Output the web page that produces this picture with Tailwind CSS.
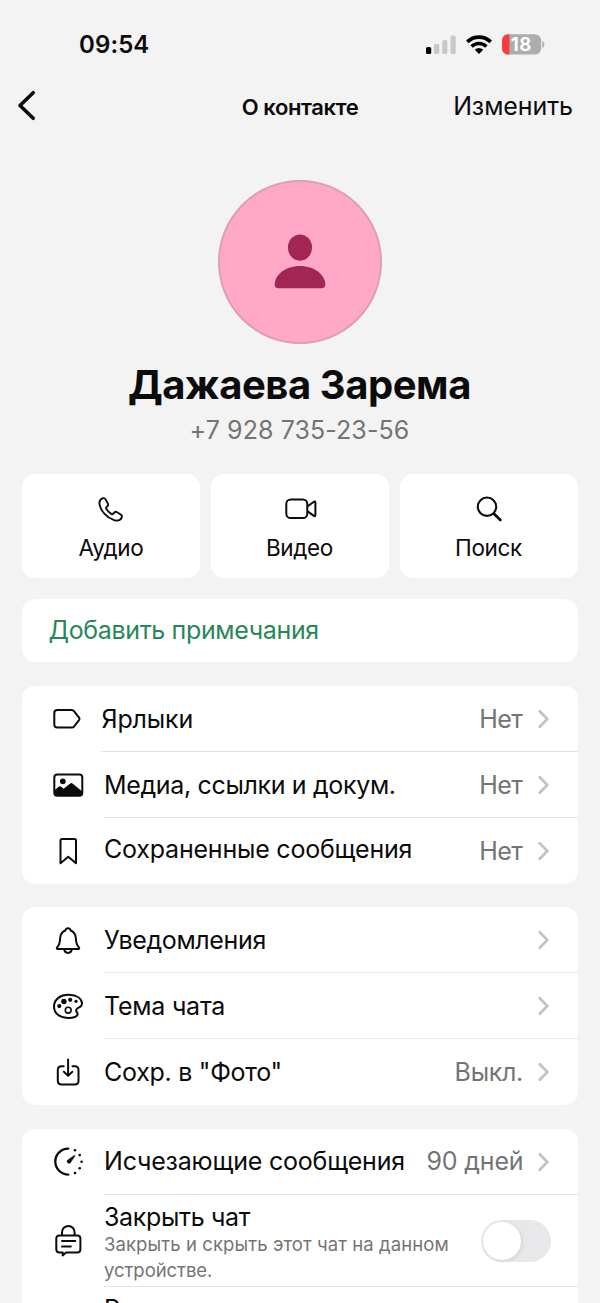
<!DOCTYPE html>
<html lang="ru">
<head>
<meta charset="utf-8">
<title>О контакте</title>
<script src="https://cdn.jsdelivr.net/npm/@tailwindcss/browser@4"></script>
</head>
<body class="bg-[#f3f3f3]">
<svg class="hidden">
  <symbol id="chev" viewBox="0 0 12 20"><path d="M1.700 2.200 9.300 10 1.700 17.800" fill="none" stroke="#c3c3c3" stroke-width="2.700" stroke-linecap="round" stroke-linejoin="round"/></symbol>
</svg>
<div class="flex h-[1303px] w-[600px] flex-col overflow-hidden font-[Inter,sans-serif] text-[25px] text-[#0b0b0b]">

  <!-- status bar -->
  <div class="flex h-[89px] shrink-0 items-center justify-between pl-[79px] pr-[55px]">
    <span class="pt-px text-[24px] font-semibold tracking-[0.1px]">09:54</span>
    <svg class="h-[24px] w-[120px]" viewBox="425 32.5 120 24">
      <rect x="426" y="46.5" width="5.2" height="7" rx="1.6" fill="#000"/>
      <rect x="434" y="43.5" width="5.2" height="10" rx="1.6" fill="#c9c9c9"/>
      <rect x="442.2" y="39.5" width="5.2" height="14" rx="1.6" fill="#c9c9c9"/>
      <rect x="450.5" y="35" width="5.2" height="18.5" rx="1.6" fill="#c9c9c9"/>
      <g fill="none" stroke="#000" stroke-width="3.6">
        <path d="M467.3 41.4a16.6 16.6 0 0 1 23.4 0"/>
        <path d="M471.6 46a10.6 10.6 0 0 1 14.8 0"/>
      </g>
      <path d="M474.8 49.2a6.2 6.2 0 0 1 8.4 0L479 53.4z" fill="#000"/>
      <clipPath id="bat"><rect x="502" y="33.7" width="39.2" height="20.4" rx="6.3"/></clipPath>
      <g clip-path="url(#bat)"><rect x="502" y="33" width="40" height="22" fill="#adadad"/><rect x="502" y="33" width="7.4" height="22" fill="#fb3a3d"/></g>
      <path d="M542.4 40.4c2.6.8 2.6 6.2 0 7z" fill="#adadad"/>
      <text x="510.800" y="50.6" font-family="Inter" font-weight="700" font-size="18.5" letter-spacing=".6" fill="#fff">18</text>
    </svg>
  </div>

  <!-- navigation -->
  <div class="grid h-[34px] shrink-0 grid-cols-3 items-center leading-[30px]">
    <svg class="ml-[16px] h-[34px] w-[22px]" viewBox="0 0.5 22 34"><path d="M17.200 4.200 4 17l13.200 12.800" fill="none" stroke="#0b0b0b" stroke-width="3.600" stroke-linecap="round" stroke-linejoin="round"/></svg>
    <span class="whitespace-nowrap pt-[2px] text-center text-[22px] font-semibold tracking-[-0.4px]">О контакте</span>
    <span class="whitespace-nowrap pr-[27px] text-right tracking-[-0.09px]">Изменить</span>
  </div>

  <!-- profile -->
  <div class="mt-[57px] flex shrink-0 flex-col items-center">
    <div class="flex size-[164px] items-center justify-center rounded-full border-2 border-[#df9cb5] bg-[#ffa9c6]">
      <svg class="h-[60px] w-[60px]" viewBox="270 232 60 60" fill="#a32553"><ellipse cx="300" cy="247.6" rx="12.1" ry="13.1"/><path d="M300 266c14.5 0 25.3 8.8 25.3 18.6 0 2.2-1.2 3.7-3.7 3.7h-43.2c-2.5 0-3.7-1.500-3.7-3.7 0-9.800 10.800-18.600 25.300-18.600z"/></svg>
    </div>
    <h1 class="mt-[16px] pr-px text-[40px] font-bold leading-[50px] tracking-[-0.44px]">Дажаева Зарема</h1>
    <p class="mt-[5px] pr-px leading-[30px] tracking-[0.09px] text-[#747474]">+7 928 735-23-56</p>
  </div>

  <!-- quick actions -->
  <div class="mx-[22px] mt-[29px] grid shrink-0 grid-cols-3 gap-[11px] text-[22.5px] leading-[28px] tracking-[-0.35px]">
    <div class="flex h-[104px] flex-col items-center rounded-[13px] bg-white pt-[20px]">
      <svg class="h-[30px] w-[36px]" viewBox="-0.6 -0.6 25.9 21.6" fill="none" stroke="#0b0b0b" stroke-width="1.35" stroke-linejoin="round"><path d="M6.1 2.6C4.6 3.3 3.7 4.700 4.100 6.900 5 11.700 9.300 16.500 14.600 18.200 17.300 19 19.300 18.300 20.100 16.300 20.400 15.500 20.200 14.900 19.600 14.400L16.700 12.500C16 12.100 15.300 12.200 14.800 12.700L13.900 13.600C13.500 14 13 14 12.500 13.700 11 12.700 9.900 11.600 9 10.200 8.700 9.700 8.800 9.200 9.200 8.800L9.900 8C10.400 7.500 10.400 6.900 10.100 6.300L8.400 3.200C7.900 2.400 7 2.200 6.100 2.600Z"/></svg>
      <span class="mt-[10px]">Аудио</span>
    </div>
    <div class="flex h-[104px] flex-col items-center rounded-[13px] bg-white pt-[20px]">
      <svg class="h-[30px] w-[36px]" viewBox="-0.7 0.5 36 30" fill="none" stroke="#0b0b0b" stroke-width="2" stroke-linejoin="round"><rect x="3.600" y="6" width="21" height="18.600" rx="4.400"/><path d="m25 12.700 6.200-4.500c.7-.5 1.500-.2 1.500.7v12.800c0 .9-.8 1.200-1.500.7L25 17.900"/></svg>
      <span class="mt-[10px] pr-px">Видео</span>
    </div>
    <div class="flex h-[104px] flex-col items-center rounded-[13px] bg-white pt-[20px]">
      <svg class="h-[30px] w-[36px]" viewBox="0 0 36 30" fill="none" stroke="#0b0b0b" stroke-linecap="round"><circle cx="16" cy="12.700" r="9.200" stroke-width="2.100"/><path d="m23.200 19.900 6.200 6" stroke-width="2.800"/></svg>
      <span class="mt-[10px] pr-px">Поиск</span>
    </div>
  </div>

  <div class="mx-[22px] mt-[21px] flex h-[63px] shrink-0 items-center rounded-[13px] bg-white pl-[26.500px] tracking-[-0.35px] text-[#278759]">Добавить примечания</div>

  <!-- media -->
  <div class="mx-[22px] mt-[24px] shrink-0 rounded-[13px] bg-white pl-[26px]">
    <div class="flex h-[66px]">
      <svg class="mt-[12px] size-[40px] shrink-0" viewBox="0 -0.5 40 40" fill="none" stroke="#0b0b0b" stroke-width="2" stroke-linejoin="round"><path d="M9.300 11.500h14.200c1.200 0 2 .4 2.700 1.300l5 6.500c.5.700.5 1.300 0 2l-5 6.500c-.7.900-1.500 1.300-2.700 1.300H9.300c-1.900 0-3-1.100-3-3V14.500c0-1.900 1.100-3 3-3z"/></svg>
      <div class="ml-[13px] flex grow items-center border-b border-[#e3e3e3] pr-[28px]">
        <span class="grow pl-[0.500px] pt-[2px] tracking-[-0.15px]">Ярлыки</span><span class="pt-[2px] tracking-[-0.5px] text-[#747474]">Нет</span><svg class="ml-[15.500px] h-[20px] w-[12px]"><use href="#chev"/></svg>
      </div>
    </div>
    <div class="flex h-[66px]">
      <svg class="mt-[12px] size-[40px] shrink-0" viewBox="0 0 40 40"><rect x="6.300" y="10.500" width="28" height="21.200" rx="3" fill="none" stroke="#0b0b0b" stroke-width="2"/><circle cx="14.800" cy="17.300" r="2.900" fill="#0b0b0b"/><path d="M6.300 26.500l4.300-3.700c1-.8 1.800-.8 2.700 0l2.300 2 6.300-5.100c1-.8 1.900-.8 2.900 0l9.500 7.800V29a2.500 2.500 0 0 1-2.500 2.500h-23A2.500 2.500 0 0 1 6.300 29z" fill="#0b0b0b"/></svg>
      <div class="ml-[16px] flex grow items-center border-b border-[#e3e3e3] pr-[28px]">
        <span class="grow pt-[2px] tracking-[-0.34px]">Медиа, ссылки и докум.</span><span class="pt-[2px] tracking-[-0.5px] text-[#747474]">Нет</span><svg class="ml-[15.500px] h-[20px] w-[12px]"><use href="#chev"/></svg>
      </div>
    </div>
    <div class="flex h-[66px]">
      <svg class="mt-[12px] size-[40px] shrink-0" viewBox="0 -0.5 40 40" fill="none" stroke="#0b0b0b" stroke-width="2" stroke-linejoin="round"><path d="M12.500 32.800V10.300c0-1 .7-1.700 1.700-1.700h12.100c1 0 1.700.7 1.700 1.700v22.500l-7.750-6.600z"/></svg>
      <div class="ml-[16px] flex grow items-center pr-[28px]">
        <span class="grow pb-[3px] tracking-[-0.21px]">Сохраненные сообщения</span><span class="pt-px tracking-[-0.5px] text-[#747474]">Нет</span><svg class="ml-[15.500px] h-[20px] w-[12px]"><use href="#chev"/></svg>
      </div>
    </div>
  </div>

  <!-- chat settings -->
  <div class="mx-[22px] mt-[23px] shrink-0 rounded-[13px] bg-white pl-[26px]">
    <div class="flex h-[66px]">
      <svg class="mt-[12px] size-[40px] shrink-0" viewBox="0 -0.6 40 40" fill="none" stroke="#0b0b0b" stroke-width="2" stroke-linejoin="round"><path d="M17.300 10.900C17.700 9.500 18.700 8.700 20 8.700s2.300.8 2.700 2.200c3.200 1.300 4.900 4 5.100 7.500.2 4.300.8 7 3 9.300.8.900.4 1.700-.7 1.700H9.900c-1.100 0-1.500-.8-.7-1.700 2.200-2.300 2.800-5 3-9.300.2-3.500 1.900-6.200 5.100-7.500z"/><path d="M16.200 29.600c.2 2.300 1.700 3.700 3.800 3.700s3.600-1.400 3.800-3.700"/></svg>
      <div class="ml-[16px] flex grow items-center border-b border-[#e8e8e8] pr-[28px]">
        <span class="grow pt-[2px] tracking-[-0.34px]">Уведомления</span><svg class="ml-[15px] h-[20px] w-[12px]"><use href="#chev"/></svg>
      </div>
    </div>
    <div class="flex h-[66px]">
      <svg class="mt-[12px] size-[40px] shrink-0" viewBox="0 -0.3 40 40" fill="none" stroke="#0b0b0b" stroke-width="2" stroke-linejoin="round"><path d="M21 9.500C12.600 9.100 6 14.200 6 21.200c0 7 5.800 11.200 13.700 11.500 5.600.2 10.200-1.500 9.900-4.300-.2-1.500-1.700-1.900-1.500-3.600.2-1.900 2.300-2.200 4-3.200 1.300-.8 2-2 1.900-3.600C33.600 13 28.600 9.800 21 9.500z"/><circle cx="20.200" cy="24.900" r="2.900" stroke-width="1.600"/><g fill="#0b0b0b" stroke="none"><circle cx="11.300" cy="20.800" r="2.100"/><circle cx="15.900" cy="16.200" r="2.700"/><circle cx="22.200" cy="14.500" r="2.100"/><circle cx="28" cy="16" r="1.600"/></g></svg>
      <div class="ml-[16px] flex grow items-center border-b border-[#e8e8e8] pr-[28px]">
        <span class="grow pt-[2px] tracking-[-0.24px]">Тема чата</span><svg class="ml-[15px] h-[20px] w-[12px]"><use href="#chev"/></svg>
      </div>
    </div>
    <div class="flex h-[66px]">
      <svg class="mt-[12px] size-[40px] shrink-0" viewBox="0 -0.5 40 40" fill="none" stroke="#0b0b0b" stroke-width="2" stroke-linecap="round" stroke-linejoin="round"><path d="M15.700 14.700h-2.200c-2.400 0-3.700 1.300-3.700 3.700v10.900c0 2.400 1.300 3.700 3.700 3.700h13.300c2.400 0 3.700-1.300 3.700-3.700V18.400c0-2.400-1.300-3.700-3.700-3.700h-2.300"/><path d="M20.100 8v16M15.900 20.300l4.200 4.100 4.200-4.100"/></svg>
      <div class="ml-[16px] flex grow items-center pr-[28px]">
        <span class="grow pt-px tracking-[-0.28px]">Сохр. в "Фото"</span><span class="pt-px tracking-[-0.3px] text-[#747474]">Выкл.</span><svg class="ml-[15px] h-[20px] w-[12px]"><use href="#chev"/></svg>
      </div>
    </div>
  </div>

  <!-- privacy -->
  <div class="mx-[22px] mt-[24px] h-[260px] shrink-0 rounded-t-[13px] bg-white pl-[26px]">
    <div class="flex h-[66px]">
      <svg class="mt-[12px] size-[40px] shrink-0" viewBox="0 -0.5 40 40"><path d="M20.300 7.100a13 13 0 0 0 0 26" fill="none" stroke="#0b0b0b" stroke-width="2.300" stroke-linecap="round"/><path d="M25.900 14.200c.8-.6 1.300 0 .7.800l-4.300 6.300c-1.200 1.600-4.400-.9-2.800-2.500z" fill="#0b0b0b" stroke="#0b0b0b" stroke-width=".6"/><g fill="#0b0b0b"><circle cx="27" cy="8.800" r="1.300"/><circle cx="31.700" cy="13.600" r="1.300"/><circle cx="33.600" cy="20.200" r="1.300"/><circle cx="31.700" cy="26.700" r="1.300"/><circle cx="27" cy="31.500" r="1.300"/></g></svg>
      <div class="ml-[16px] flex grow items-center border-b border-[#e3e3e3] pr-[28px]">
        <span class="grow pt-px tracking-[-0.2px]">Исчезающие сообщения</span><span class="pt-px tracking-[-0.17px] text-[#747474]">90 дней</span><svg class="ml-[14.500px] h-[20px] w-[12px]"><use href="#chev"/></svg>
      </div>
    </div>
    <div class="flex h-[92px]">
      <svg class="mt-[25px] size-[40px] shrink-0" viewBox="0 -0.7 40 40" fill="none" stroke="#0b0b0b" stroke-width="2" stroke-linecap="round" stroke-linejoin="round"><path d="M14 14.100v-2.600a6.300 6.300 0 0 1 12.600 0v2.600"/><path d="M11.500 14.700h17.700c2 0 3.200 1.200 3.200 3.200v10.600c0 2-1.200 3.200-3.200 3.200H18l-3.300 3v-3h-3.200c-2 0-3.200-1.200-3.200-3.200V17.900c0-2 1.200-3.200 3.200-3.200z"/><path d="M14 20.400h13.300M14 25.700h8.800"/></svg>
      <div class="ml-[16px] flex grow items-center border-b border-[#e3e3e3] pr-[27px]">
        <div class="h-full grow pt-[8px]">
          <div class="leading-[28px] tracking-[-0.35px]">Закрыть чат</div>
          <div class="whitespace-nowrap text-[18.500px] leading-[26px] tracking-[0.09px] text-[#747474]">Закрыть и скрыть этот чат на данном<br><span class="tracking-[-0.05px]">устройстве.</span></div>
        </div>
        <div class="flex h-[42px] w-[70px] items-center rounded-full bg-[#e8e8ea] pl-[2px]"><div class="size-[38px] rounded-full bg-white shadow-[1px_1px_4px_rgba(0,0,0,0.1)]"></div></div>
      </div>
    </div>
    <div class="ml-[56px] whitespace-nowrap pt-[8px] leading-[28px] tracking-[-0.2px]">Расширенная</div>
  </div>
</div>
</body>
</html>
